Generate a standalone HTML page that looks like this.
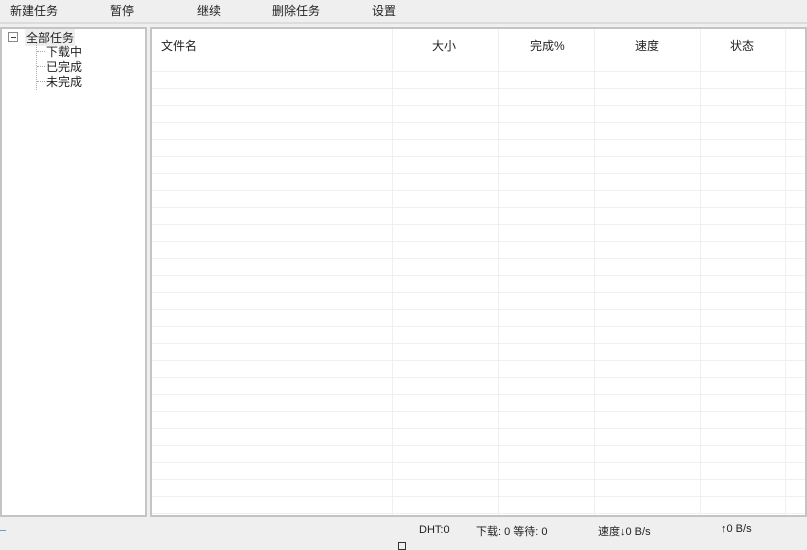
<!DOCTYPE html>
<html><head><meta charset="utf-8"><style>
body{margin:0;width:807px;height:546px;background:#efefef;position:relative;overflow:hidden;font-family:"Liberation Sans","Noto Sans CJK SC",sans-serif;font-size:12px;color:#222}
.t{position:absolute;white-space:nowrap}
.tb{top:2px;font-size:12px}
.panel{position:absolute;background:#fff;border:2px solid #c4c4c4;box-sizing:border-box}
.vl{position:absolute;top:0;bottom:0;width:1px;background:#efefef}
.hd{position:absolute;top:8px;font-size:12px}
</style></head><body>
<div class="t tb" style="left:10px">新建任务</div>
<div class="t tb" style="left:110px">暂停</div>
<div class="t tb" style="left:197px">继续</div>
<div class="t tb" style="left:272px">删除任务</div>
<div class="t tb" style="left:372px">设置</div>
<div style="position:absolute;left:0;top:22px;width:807px;height:2px;background:#dcdcdc"></div>

<div class="panel" style="left:0;top:27px;width:147px;height:490px">
 <div class="t" style="left:6px;top:3px;width:8px;height:8px;border:1px solid #888;font-size:0"><div style="position:absolute;left:2px;top:4px;width:5px;height:1px;background:#444"></div></div>
 <div class="t" style="left:23px;top:0;background:#eee;padding:0 1px">全部任务</div>
 <div class="t" style="left:34px;top:14px;width:1px;height:47px;border-left:1px dotted #aaa"></div>
 <div class="t" style="left:35px;top:22px;width:8px;border-top:1px dotted #aaa"></div>
 <div class="t" style="left:35px;top:37px;width:8px;border-top:1px dotted #aaa"></div>
 <div class="t" style="left:35px;top:52px;width:8px;border-top:1px dotted #aaa"></div>
 <div class="t" style="left:44px;top:14px">下载中</div>
 <div class="t" style="left:44px;top:29px">已完成</div>
 <div class="t" style="left:44px;top:44px">未完成</div>
</div>

<div class="panel" style="left:150px;top:27px;width:657px;height:490px;background:#fff repeating-linear-gradient(to bottom,transparent 0,transparent 16px,#f0f0f0 16px,#f0f0f0 17px) 0 26px/100% 100% no-repeat">
 <div style="position:absolute;left:0;right:0;top:0;height:26px;background:#fff"></div>
 <div class="vl" style="left:240px"></div>
 <div class="vl" style="left:346px"></div>
 <div class="vl" style="left:442px"></div>
 <div class="vl" style="left:548px"></div>
 <div class="vl" style="left:633px"></div>
 <div class="t hd" style="left:9px">文件名</div>
 <div class="t hd" style="left:280px">大小</div>
 <div class="t hd" style="left:378px">完成%</div>
 <div class="t hd" style="left:483px">速度</div>
 <div class="t hd" style="left:578px">状态</div>
</div>

<div style="position:absolute;left:0;top:530px;width:6px;height:1px;background:#5aa0d8"></div>
<div class="t" style="left:419px;top:524px;font-size:11px">DHT:0</div>
<div class="t" style="left:476px;top:523px;font-size:11px">下载: 0 等待: 0</div>
<div class="t" style="left:598px;top:523px;font-size:11px">速度↓0 B/s</div>
<div class="t" style="left:721px;top:523px;font-size:11px">↑0 B/s</div>
<div style="position:absolute;left:398px;top:542px;width:6px;height:6px;border:1px solid #333"></div>
</body></html>
